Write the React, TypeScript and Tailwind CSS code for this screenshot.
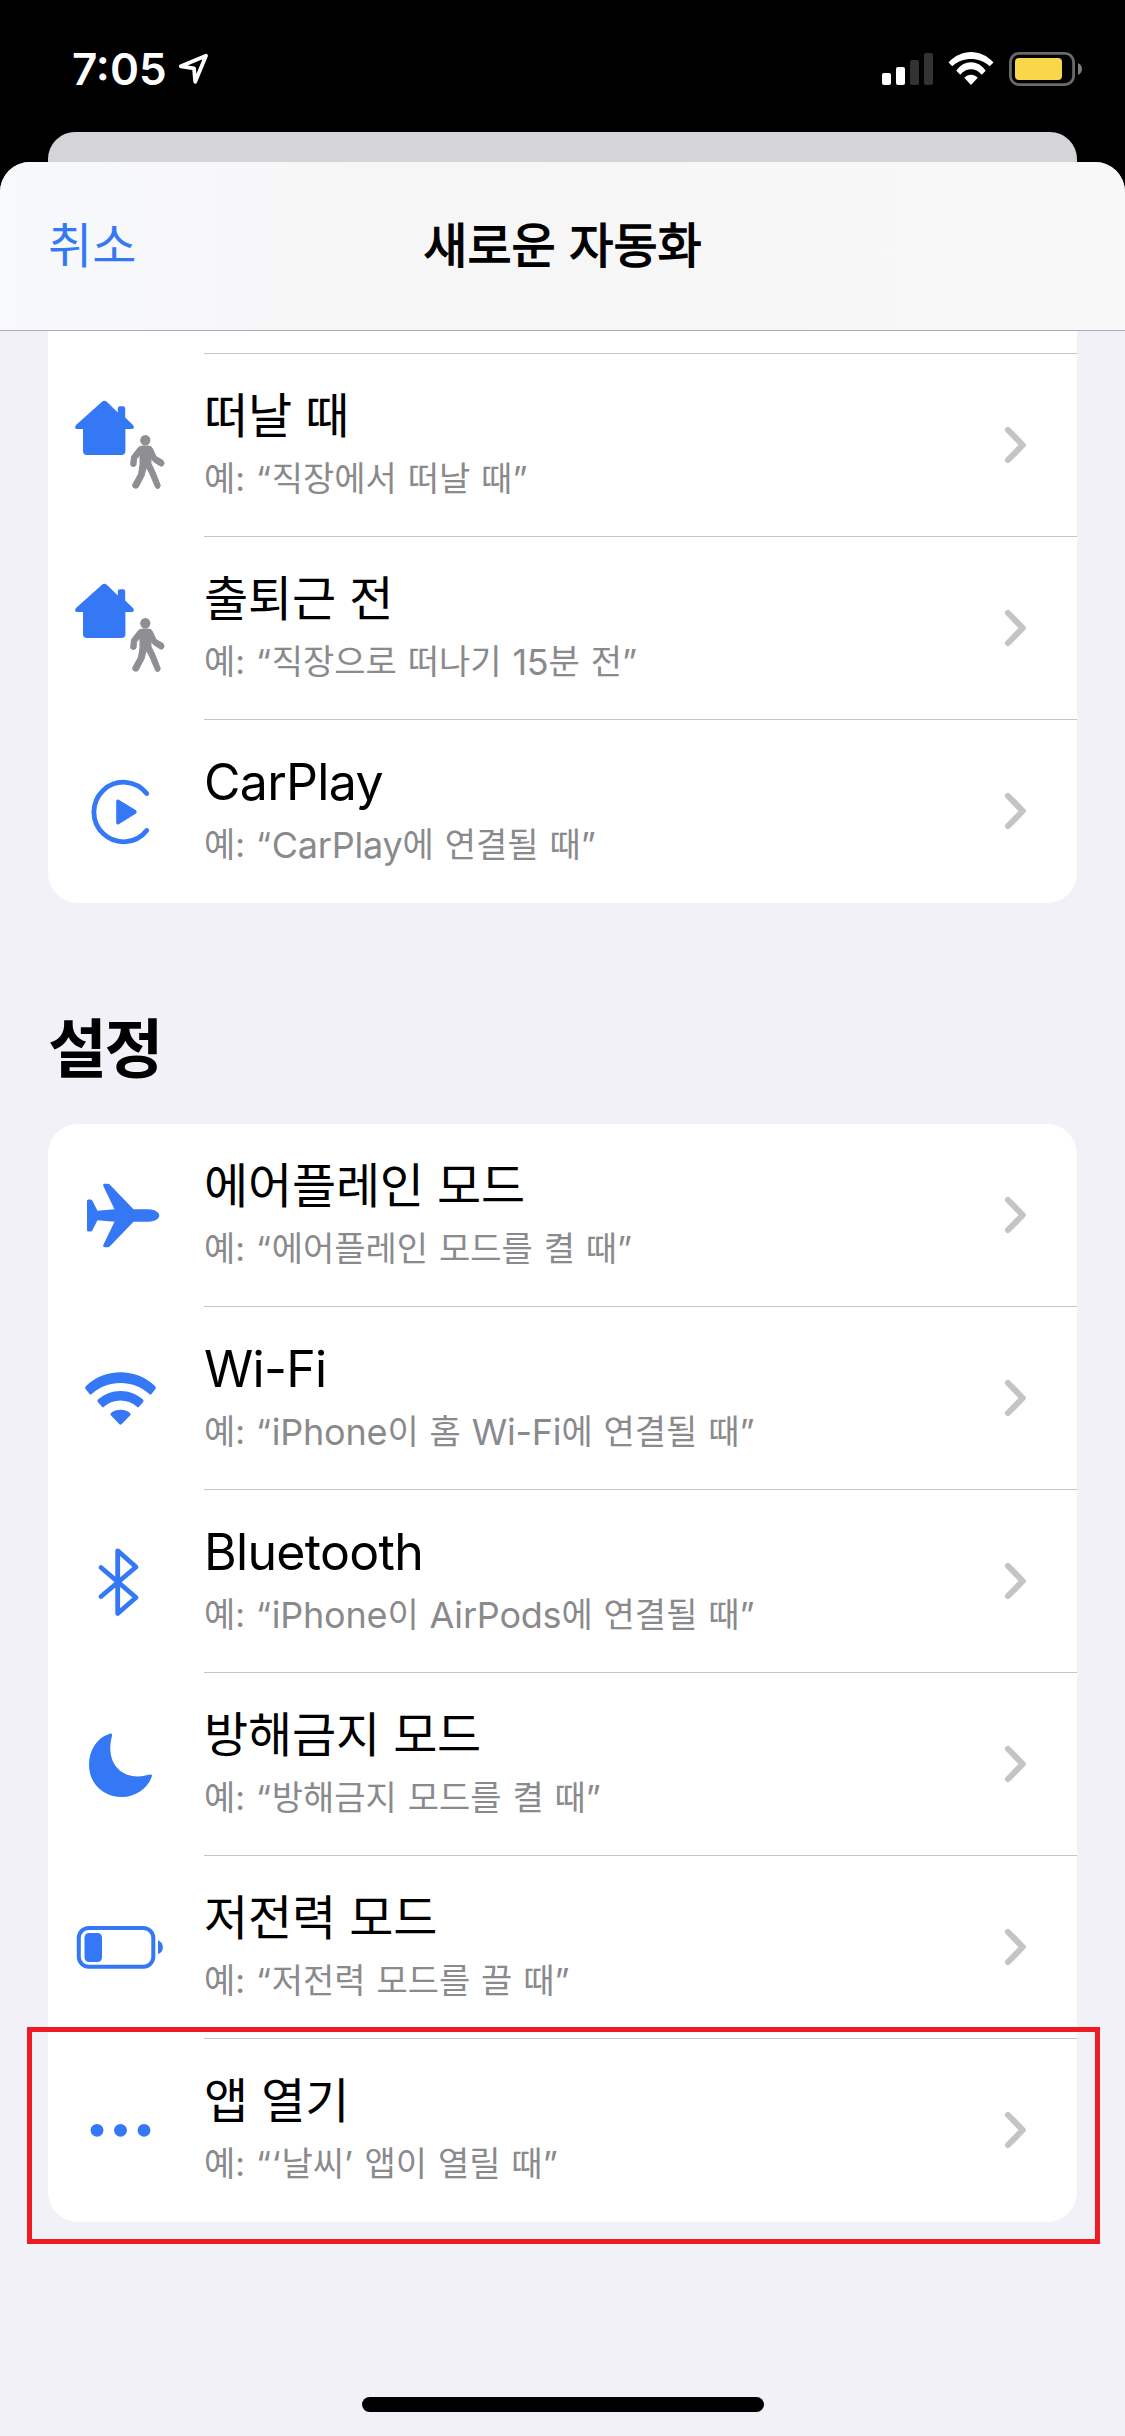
import type { ReactNode } from "react";

const HOUSE = "M30 4.8Q32.4 2.6 34.8 4.8L45.8 15.5V11.5Q45.8 9.3 48 9.3H51Q53.2 9.3 53.2 11.5V20.5L61 28Q63.4 31.9 59.5 32H53.4V54Q53.4 58 49.4 58H15Q11 58 11 54V32H5.5Q1.5 31.9 4 28Z";

function Icon({ children }: { children: ReactNode }) {
  return (
    <svg viewBox="0 0 96 96" className="ml-6 h-24 w-24 shrink-0" fill="#3478f6">
      {children}
    </svg>
  );
}

const leave = (
  <Icon>
    <path d={HOUSE} />
    <g fill="#8e8e93">
      <ellipse cx="73.3" cy="43.2" rx="5.1" ry="5.2" />
      <path
        d="M70.5 49H76.5Q79.5 49 80.6 52L84 59.5L91 63.5Q93.5 66.5 90.5 69Q89 69.5 87.5 68.5L81.5 64.5L79 61V66.5L83.5 76L88.3 88.5Q88 91.8 85 91.5Q83.5 91 83 89L77.5 76L74.2 70.5L72 79L66 90.5Q64 92 61.5 90.5Q60 89 61 87L66.5 77L68 68V58L64.5 62L64 68Q62.5 70.5 59.5 69Q58.5 68.5 58.8 66L59.5 59.5L66.5 50.5Q68 49 70.5 49Z"
        stroke="#8e8e93"
        strokeWidth="1"
      />
    </g>
  </Icon>
);

const carplay = (
  <Icon>
    <path d="M74.7 30.5A29.6 29.8 0 1 0 74.7 67.5" fill="none" stroke="#3478f6" strokeWidth="4.8" strokeLinecap="round" />
    <path d="M44.2 38.5Q44.2 35.5 46.7 36.8L64 47.3Q65.5 49 64 50.5L46.7 61.2Q44.2 62.5 44.2 59.5Z" />
  </Icon>
);

const airplane = (
  <Icon>
    <path d="M15 34Q15 32.5 16.5 32.5H18.5Q20 32.5 20.5 34L25.5 43.8L42.5 42.3L31.2 18.7Q30.7 16.7 32.5 16.7H35.5Q37.2 16.7 38.2 18L61.5 42.2H77C83 42.5 87.3 45.5 87.3 48.5S83 54.5 77 54.8H61.5L38.2 79Q37.2 80.3 35.5 80.3H32.5Q30.7 80.3 31.2 78.3L42.5 54.7L25.5 53.2L20.5 63Q20 64.5 18.5 64.5H16.5Q15 64.5 15 63Z" />
  </Icon>
);

const wifi = (
  <Icon>
    <path d="M13.8 39.2Q12.3 38 13.8 36.2C32 17.5 65 17.5 83.2 36.2Q84.7 38 83.2 39.2L79.5 44Q78.5 45 77.3 44C61.5 29.2 35.5 29.2 19.7 44Q18.5 45 17.5 44Z" />
    <path d="M26 52.2Q24.7 51 26 49.6C38 38 59 38 71 49.6Q72.3 51 71 52.2L67 56.7Q66 57.7 65 56.7C55.5 48.5 41.5 48.5 32 56.7Q31 57.7 30 56.7Z" />
    <path d="M39 65.5Q37.6 64.2 39 63C44 58.8 53 58.8 58 63Q59.4 64.2 58 65.5L49.8 74Q48.5 75.3 47.2 74Z" />
  </Icon>
);

const bluetooth = (
  <Icon>
    <path d="M29 34.5L64 64.5L45.7 80.5V17.8L64 34L29 63.5" fill="none" stroke="#3478f6" strokeWidth="4.8" strokeLinecap="round" strokeLinejoin="round" />
  </Icon>
);

const moon = (
  <Icon>
    <path d="M36.5 18.2Q39.8 16.5 40 18.5Q40.2 19.5 39.7 21C34 44 46 60.5 66 60.5Q71 60.5 76.5 58.8Q80.8 57.5 79.8 60.5C76 72 64 81 50 81C31 81 17 67.5 17 48.8C17 34 25 22 36.5 18.2Z" />
  </Icon>
);

const lowPower = (
  <Icon>
    <rect x="6.8" y="29" width="74.5" height="38.8" rx="10" fill="none" stroke="#3478f6" strokeWidth="4" />
    <rect x="12.5" y="34" width="17.5" height="29" rx="4.5" />
    <path d="M86 41.3C92.5 43.5 92.5 53.5 86 55Z" />
  </Icon>
);

const dots = (
  <Icon>
    <circle cx="25" cy="48.3" r="6.4" />
    <circle cx="48.5" cy="48.3" r="6.4" />
    <circle cx="72" cy="48.3" r="6.4" />
  </Icon>
);

const places = [
  { icon: leave, title: "떠날 때", desc: "예: “직장에서 떠날 때”" },
  { icon: leave, title: "출퇴근 전", desc: "예: “직장으로 떠나기 15분 전”" },
  { icon: carplay, title: "CarPlay", desc: "예: “CarPlay에 연결될 때”" },
];

const settings = [
  { icon: airplane, title: "에어플레인 모드", desc: "예: “에어플레인 모드를 켤 때”" },
  { icon: wifi, title: "Wi-Fi", desc: "예: “iPhone이 홈 Wi-Fi에 연결될 때”" },
  { icon: bluetooth, title: "Bluetooth", desc: "예: “iPhone이 AirPods에 연결될 때”" },
  { icon: moon, title: "방해금지 모드", desc: "예: “방해금지 모드를 켤 때”" },
  { icon: lowPower, title: "저전력 모드", desc: "예: “저전력 모드를 끌 때”" },
  { icon: dots, title: "앱 열기", desc: "예: “‘날씨’ 앱이 열릴 때”" },
];

// Latin runs are set a little larger than the Hangul beside them
function Mixed({ text, latin }: { text: string; latin: string }) {
  return text.split(/([A-Za-z0-9-]+|[“”‘’]+)/).map((part, i) =>
    i % 2 ? (
      <span key={i} className={/[“”‘’]/.test(part) ? "tracking-[0.8px]" : latin}>{part}</span>
    ) : (
      part
    )
  );
}

function Row({ icon, title, desc, last }: { icon: ReactNode; title: string; desc: string; last: boolean }) {
  return (
    <li className="flex h-[183px] items-stretch">
      <div className="flex w-[156px] items-center pb-px">{icon}</div>
      <div className={`flex flex-1 items-center justify-between border-b pr-[51px] ${last ? "border-transparent" : "border-[#c6c6c8]"}`}>
        <div className="whitespace-nowrap">
          <h3 className="h-[64px] text-[48px] leading-[64px] tracking-[-0.2px] text-black">
            <Mixed text={title} latin="relative top-px text-[50px] leading-none tracking-[-0.7px]" />
          </h3>
          <p className="h-[58px] text-[34px] leading-[62px] text-[#8a8a8d] [word-spacing:1.3px]">
            <Mixed text={desc} latin="relative top-px text-[36px] leading-none tracking-[-0.2px]" />
          </p>
        </div>
        <svg viewBox="0 0 22 38" className="h-[38px] w-[22px]" fill="none" stroke="#c4c4c6" strokeWidth="6" strokeLinecap="round" strokeLinejoin="round">
          <path d="M4 4L18.8 19L4 34" />
        </svg>
      </div>
    </li>
  );
}

export default function App() {
  return (
    <div className="relative flex h-[2436px] w-[1125px] flex-col overflow-hidden bg-black font-['Inter','Noto_Sans_CJK_KR',sans-serif]">
      {/* Status bar */}
      <header className="flex h-[132px] items-start justify-between pt-[44px] pr-[43px] pl-[72px] text-white">
        <div className="flex items-center">
          <span className="w-[106px] text-[44px] leading-[50px] font-semibold">7:05</span>
          <svg viewBox="0 0 32 34" className="h-[34px] w-8" fill="none" stroke="#fff" strokeWidth="3.8" strokeLinejoin="round">
            <path d="M2.8 14.3L28 3.8L17.2 29.7L16 16.3Z" />
          </svg>
        </div>
        <svg viewBox="0 0 200 50" className="h-[50px] w-[200px]" fill="#fff">
          <rect x="0" y="29" width="9" height="12" rx="2" />
          <rect x="14" y="23" width="9" height="18" rx="2" />
          <rect x="28" y="16" width="9" height="25" rx="2" fill="#333" />
          <rect x="42" y="9" width="9" height="32" rx="2" fill="#333" />
          <path d="M66.5 18.5C79 4.5 99 4.5 111.5 18.5L107.7 22.3C97 12.6 81 12.6 70.3 22.3Z" />
          <path d="M74.3 26.7C82 15.5 96 15.5 103.7 26.7L99.7 30.7C93.5 23.5 84.5 23.5 78.3 30.7Z" />
          <path d="M82.3 33.8C86 29.6 92 29.6 95.7 33.8L89 41Z" />
          <rect x="128.4" y="9.4" width="63.2" height="31.2" rx="8.5" fill="none" stroke="#6a6a6a" strokeWidth="2.8" />
          <rect x="133" y="14" width="47" height="22" rx="4" fill="#f8d74a" />
          <path d="M196 19C201.3 21.5 201.3 28.5 196 31Z" fill="#7f7f7f" />
        </svg>
      </header>

      <div className="mx-12 h-[30px] rounded-t-[27px] bg-[#d5d4d9]" />

      {/* Sheet */}
      <div className="flex flex-1 flex-col rounded-t-[30px] bg-[#f2f1f7]">
        <nav className="grid h-[169px] shrink-0 grid-cols-3 items-center rounded-t-[30px] border-b border-[#acacb0] bg-linear-to-r from-[#f8f9fd] via-[#f6f6f6] via-35% to-[#f8f8f8] px-12 text-[48px]">
          <button className="text-left text-[#3478f6]">취소</button>
          <h1 className="text-center font-normal whitespace-nowrap [-webkit-text-stroke:1.3px_black]">새로운 자동화</h1>
        </nav>

        <main className="flex flex-col px-12">
          <div className="rounded-b-[30px] bg-white">
            <div className="ml-[156px] h-[23px] border-b border-[#c6c6c8]" />
            <ul>
              {places.map((item, i) => (
                <Row key={item.title} {...item} last={i === places.length - 1} />
              ))}
            </ul>
          </div>
          <h2 className="mt-[102px] h-[119px] text-[64px] leading-[88px] font-bold tracking-[-2.5px]">설정</h2>
          <ul className="rounded-[30px] bg-white">
            {settings.map((item, i) => (
              <Row key={item.title} {...item} last={i === settings.length - 1} />
            ))}
          </ul>
        </main>

        <div className="mt-auto mb-6 flex justify-center">
          <div className="h-[15px] w-[402px] rounded-full bg-black" />
        </div>
      </div>

      {/* Highlight around the last row */}
      <div className="absolute top-[2027px] left-[27px] h-[217px] w-[1073px] border-[5px] border-[#ed1c24]" />
    </div>
  );
}
